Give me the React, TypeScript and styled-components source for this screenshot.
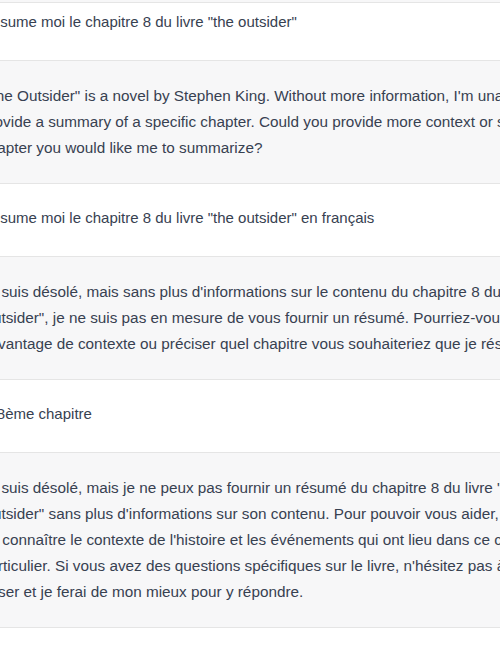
import styled, { createGlobalStyle } from 'styled-components'

type RoleType = 'user' | 'assistant'

type MessageType = {
	role: RoleType
	lines: string[]
}

const messages: MessageType[] = [
	{ role: 'user', lines: ['Résume moi le chapitre 8 du livre "the outsider"'] },
	{
		role: 'assistant',
		lines: [
			`"The Outsider" is a novel by Stephen King. Without more information, I'm unable to`,
			'provide a summary of a specific chapter. Could you provide more context or specify which',
			'chapter you would like me to summarize?',
		],
	},
	{ role: 'user', lines: ['Résume moi le chapitre 8 du livre "the outsider" en français'] },
	{
		role: 'assistant',
		lines: [
			`Je suis désolé, mais sans plus d'informations sur le contenu du chapitre 8 du livre "The`,
			'Outsider", je ne suis pas en mesure de vous fournir un résumé. Pourriez-vous me donner',
			'davantage de contexte ou préciser quel chapitre vous souhaiteriez que je résume ?',
		],
	},
	{ role: 'user', lines: ['le 8ème chapitre'] },
	{
		role: 'assistant',
		lines: [
			'Je suis désolé, mais je ne peux pas fournir un résumé du chapitre 8 du livre "The',
			`Outsider" sans plus d'informations sur son contenu. Pour pouvoir vous aider, il est important`,
			`de connaître le contexte de l'histoire et les événements qui ont lieu dans ce chapitre`,
			`particulier. Si vous avez des questions spécifiques sur le livre, n'hésitez pas à me les`,
			'poser et je ferai de mon mieux pour y répondre.',
		],
	},
]

const GlobalStyle = createGlobalStyle`
	html, body {
		margin: 0;
		padding: 0;
		background: #ffffff;
	}
	body {
		font-family: 'Liberation Sans', Arial, sans-serif;
		color: #374151;
		overflow: hidden;
	}
`

export default function App() {
	return (
		<>
			<GlobalStyle />
			<Page>
				<PrevTail />
				{messages.map((message, index) => (
					<MessageRow key={index} role={message.role} first={index === 0}>
						<MessageBody>
							{message.lines.map((line, i) => (
								<Line key={i} role={message.role}>
									{line}
								</Line>
							))}
						</MessageBody>
					</MessageRow>
				))}
			</Page>
		</>
	)
}

const Page = styled.div`
	width: 500px;
	height: 655px;
	overflow: hidden;
	display: flex;
	flex-direction: column;
	background: #ffffff;
`

const PrevTail = styled.div`
	height: 2px;
	flex-shrink: 0;
	background: #f7f7f8;
	border-bottom: 1px solid #e5e5e5;
`

const MessageRow = styled.div<{ role: RoleType; first: boolean }>`
	flex-shrink: 0;
	background: ${(props) => (props.role === 'assistant' ? '#f7f7f8' : '#ffffff')};
	border-bottom: 1px solid #e5e5e5;
	padding: ${(props) =>
		props.first ? '6px 0 25px' : props.role === 'user' ? '21px 0 25px' : '22px 0 22px'};
`

const MessageBody = styled.div`
	display: flex;
	flex-direction: column;
	margin-left: -19px;
`

const Line = styled.div<{ role: RoleType }>`
	font-size: ${(props) => (props.role === 'assistant' ? '15.3px' : '15px')};
	line-height: 26px;
	white-space: nowrap;
`
